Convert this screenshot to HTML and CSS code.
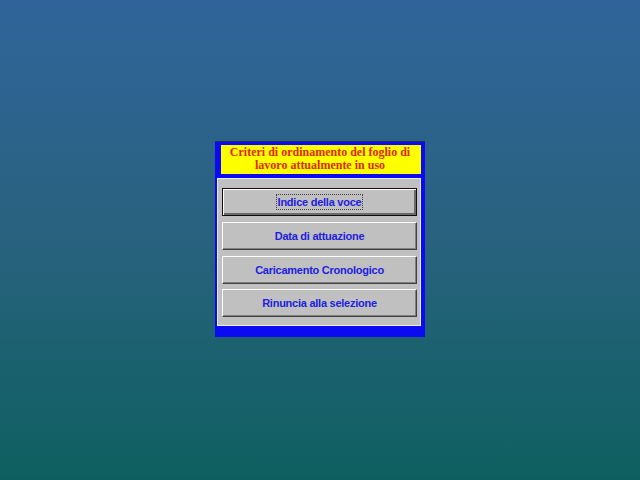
FILE: index.html
```html
<!DOCTYPE html>
<html lang="it">
<head>
<meta charset="utf-8">
<title>Criteri di ordinamento</title>
<link rel="stylesheet" href="styles.css">
</head>
<body>
<div class="screen">
  <div class="dialog">
    <div class="title">Criteri di ordinamento del foglio di<br>lavoro attualmente in uso</div>
    <div class="panel">
      <button class="btn default"><span class="focus">Indice della voce</span></button>
      <button class="btn">Data di attuazione</button>
      <button class="btn">Caricamento Cronologico</button>
      <button class="btn last">Rinuncia alla selezione</button>
    </div>
  </div>
</div>
</body>
</html>
```
FILE: styles.css
```css
html, body {
  margin: 0;
  padding: 0;
}
.screen {
  width: 640px;
  height: 480px;
  background: linear-gradient(180deg, #30649a 0%, #28627e 50%, #0e6060 100%);
  padding-top: 141px;
  box-sizing: border-box;
  overflow: hidden;
}
.dialog {
  margin-left: 215px;
  width: 210px;
  box-sizing: border-box;
  background: #0a0af4;
  border-top: 1px solid #22305a;
  padding: 0 4px 11px 2px;
}
.title {
  margin: 3px 0 4px 4px;
  height: 29px;
  box-sizing: border-box;
  background: #ffff00;
  color: #e02800;
  font-family: "Liberation Serif", "Times New Roman", serif;
  font-weight: bold;
  font-size: 12px;
  line-height: 13px;
  text-align: center;
  padding: 1px 2px 0 0;
}
.panel {
  background: #c0c0c0;
  border: 1px solid #ececf4;
  padding: 9px 3px 8px 4px;
  display: flex;
  flex-direction: column;
  gap: 6px;
}
.btn {
  display: block;
  width: 195px;
  height: 28px;
  box-sizing: border-box;
  margin: 0;
  padding: 0;
  background: #c0c0c0;
  border: 1px solid;
  border-color: #ffffff #404040 #404040 #ffffff;
  box-shadow: inset -1px -1px #808080;
  color: #2020e0;
  font-family: "Liberation Sans", Arial, sans-serif;
  font-weight: bold;
  font-size: 11px;
  letter-spacing: -0.25px;
  text-align: center;
  cursor: default;
}
.btn.default {
  border: 1px solid #101010;
  box-shadow: inset 1px 1px #ffffff, inset -2px -2px #6a6a6a;
}
.btn.last {
  margin-top: -1px;
}
.focus {
  outline: 1px dotted #404040;
  outline-offset: 1px;
}
```
